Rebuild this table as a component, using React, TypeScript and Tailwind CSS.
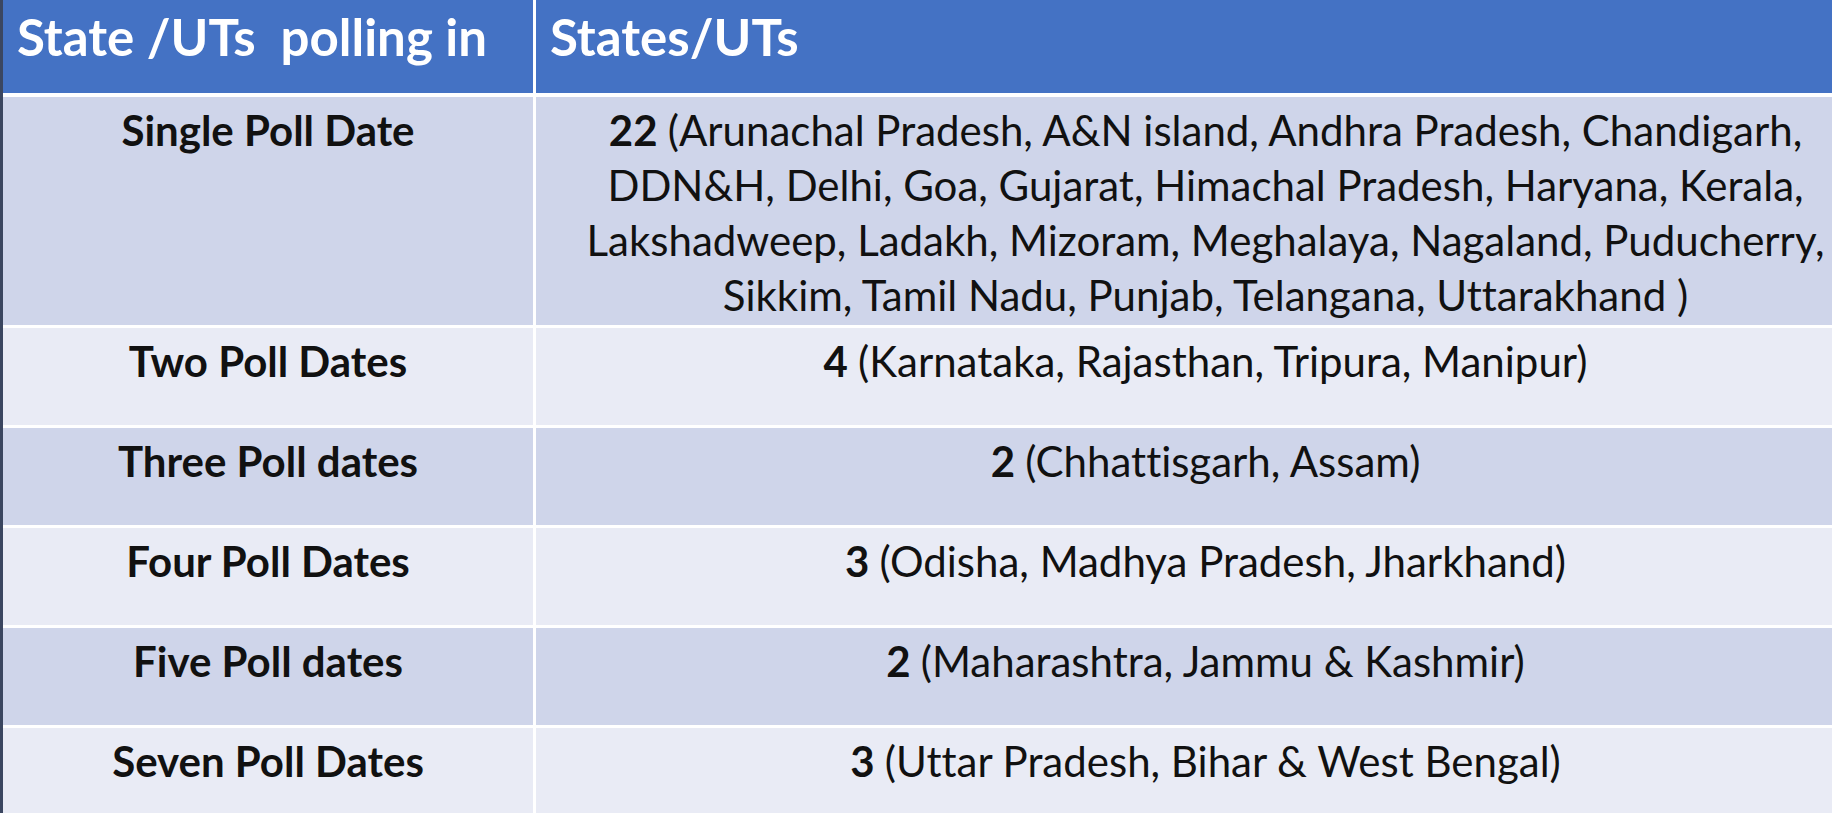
const rows = [
  {
    label: "Single Poll Date",
    count: "22",
    lines: [
      "(Arunachal Pradesh, A&N island, Andhra Pradesh, Chandigarh,",
      "DDN&H, Delhi, Goa, Gujarat, Himachal Pradesh, Haryana, Kerala,",
      "Lakshadweep, Ladakh, Mizoram, Meghalaya, Nagaland, Puducherry,",
      "Sikkim, Tamil Nadu, Punjab, Telangana, Uttarakhand )",
    ],
    tall: true,
  },
  { label: "Two Poll Dates", count: "4", lines: ["(Karnataka, Rajasthan, Tripura, Manipur)"] },
  { label: "Three Poll dates", count: "2", lines: ["(Chhattisgarh, Assam)"] },
  { label: "Four Poll Dates", count: "3", lines: ["(Odisha, Madhya Pradesh, Jharkhand)"] },
  { label: "Five Poll dates", count: "2", lines: ["(Maharashtra, Jammu & Kashmir)"] },
  { label: "Seven Poll Dates", count: "3", lines: ["(Uttar Pradesh, Bihar & West Bengal)"] },
];

const App = () => {
  return (
    <div className="w-full h-[813px] overflow-hidden bg-white font-['Lato','Liberation_Sans',sans-serif] text-[#111] [font-variant-ligatures:none]">
      <div className="w-[1875px] border-l-[3px] border-[#3b4660] bg-white">
        <div className="grid grid-cols-[530px_1fr] gap-x-[3px] h-[93px] bg-[#4472c4]">
          <div className="bg-[#4472c4] pl-[14px] pt-[9px] text-[51px] leading-[56px] font-bold text-white whitespace-pre">
            State /UTs  polling in
          </div>
          <div className="bg-[#4472c4] pl-[14px] pt-[9px] text-[51px] leading-[56px] font-bold text-white border-l-[3px] border-white -ml-[3px]">
            States/UTs
          </div>
        </div>
        <div className="flex flex-col gap-y-[3px] pt-[4px]">
          {rows.map((row, i) => (
            <div
              key={row.label}
              className={`grid grid-cols-[530px_1fr] gap-x-[3px] ${row.tall ? "h-[228px]" : "h-[97px]"}`}
            >
              <div
                className={`${i % 2 === 0 ? "bg-[#cfd5ea]" : "bg-[#e9ebf5]"} pt-[6px] text-center text-[42px] leading-[55px] font-bold`}
              >
                {row.label}
              </div>
              <div
                className={`${i % 2 === 0 ? "bg-[#cfd5ea]" : "bg-[#e9ebf5]"} pt-[6px] text-center text-[42px] leading-[55px]`}
              >
                {row.lines.map((line, j) => (
                  <div key={j} className="whitespace-nowrap">
                    {j === 0 && <span className="font-bold">{row.count} </span>}
                    {line}
                  </div>
                ))}
              </div>
            </div>
          ))}
        </div>
      </div>
    </div>
  );
};

export default App;
